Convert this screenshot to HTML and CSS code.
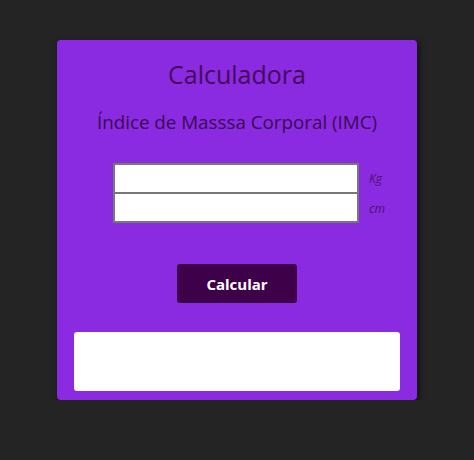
FILE: index.html
```html
<!DOCTYPE html>
<html lang="pt-BR">
<head>
<meta charset="utf-8">
<title>Calculadora IMC</title>
<link rel="stylesheet" href="styles.css">
</head>
<body>
  <main class="card">
    <h1 class="title">Calculadora</h1>
    <h2 class="subtitle">Índice de Masssa Corporal (IMC)</h2>
    <div class="fields">
      <div class="field">
        <input class="input" type="text">
        <span class="unit">Kg</span>
      </div>
      <div class="field">
        <input class="input" type="text">
        <span class="unit">cm</span>
      </div>
    </div>
    <button class="btn" type="button">Calcular</button>
    <div class="result"></div>
  </main>
</body>
</html>
```

FILE: styles.css
```css
html, body {
  margin: 0;
  padding: 0;
  background: #242424;
  font-family: "Open Sans", "Noto Sans", sans-serif;
}
body {
  padding-top: 40px;
}
.card {
  width: 360px;
  height: 360px;
  box-sizing: border-box;
  margin: 0 auto;
  background: #8a2be2;
  border-radius: 4px;
  box-shadow: 2px 3px 6px rgba(0,0,0,0.6);
  padding: 18px 16px 9px;
  display: flex;
  flex-direction: column;
  align-items: center;
}
.title {
  margin: 0;
  font-size: 25px;
  font-weight: 400;
  line-height: 32px;
  color: #46095a;
}
.subtitle {
  margin: 19px 0 0;
  font-size: 18.8px;
  font-weight: 400;
  line-height: 26px;
  color: #3a0a52;
}
.fields {
  margin-top: 28px;
  display: flex;
  flex-direction: column;
  padding-left: 48px;
}
.field {
  display: flex;
  align-items: center;
}
.input {
  width: 246px;
  height: 30px;
  box-sizing: border-box;
  margin: 0;
  border: 2px solid #777;
  border-radius: 0;
  background: #fff;
  padding: 0 4px;
}
.field:first-child .input {
  border-bottom-width: 1px;
}
.field + .field .input {
  border-top-width: 1px;
}
.unit {
  width: 40px;
  margin-left: 10px;
  font-size: 12px;
  font-style: italic;
  color: #4b1270;
}
.btn {
  margin-top: 41px;
  width: 120px;
  height: 39px;
  border: none;
  border-radius: 3px;
  background: #3e0049;
  color: #fff;
  font-family: inherit;
  font-size: 15px;
  font-weight: 700;
  cursor: pointer;
}
.result {
  margin-top: 29px;
  width: 326px;
  height: 59px;
  background: #fff;
  border-radius: 3px;
}
```
